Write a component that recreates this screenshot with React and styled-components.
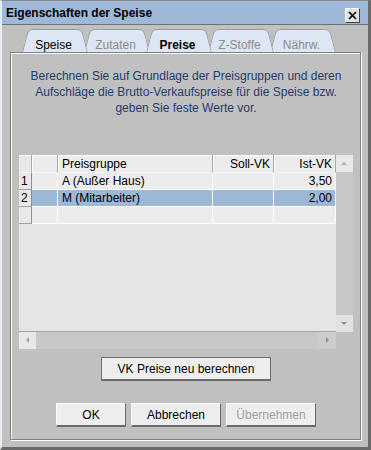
import React from 'react';
import styled, { createGlobalStyle, css } from 'styled-components';

const Global = createGlobalStyle`
  html, body { margin: 0; padding: 0; background: #c0c0c0; }
  body { font-family: "Liberation Sans", Arial, sans-serif; font-size: 12px; color: #000; }
  * { box-sizing: border-box; }
`;

const Window = styled.div`
  width: 371px;
  height: 450px;
  border-left: 2px solid #e4ecf6;
  border-top: 1px solid #8a8a8a;
  border-right: 3px solid #6b6b6b;
  border-bottom: 3px solid #6b6b6b;
  background: #c0c0c0;
  display: flex;
  flex-direction: column;
`;

const TitleBar = styled.div`
  flex: none;
  height: 24px;
  background: #a0b8d8;
  border-bottom: 1px solid #6a7280;
  display: flex;
  align-items: flex-end;
  justify-content: space-between;
  padding: 0 8px 1px 4px;
`;

const Title = styled.div`
  align-self: center;
  margin-top: 2px;
  font-weight: bold;
  font-size: 12px;
  line-height: 14px;
`;

const CloseButton = styled.div`
  width: 15px;
  height: 15px;
  background: #e2e2e2;
  border-top: 1px solid #ffffff;
  border-left: 1px solid #ffffff;
  border-right: 1px solid #404040;
  border-bottom: 1px solid #404040;
  display: flex;
  align-items: center;
  justify-content: center;
`;

const Body = styled.div`
  flex: 1;
  display: flex;
  flex-direction: column;
  padding: 4px 7px 7px 8px;
`;

const TabStrip = styled.div`
  display: flex;
  height: 23px;
  margin-left: 12px;
  flex: none;
`;

const Tab = styled.div`
  position: relative;
  width: 66px;
  height: 23px;
  margin-left: ${p => (p.$first ? '0' : '-4px')};
  z-index: ${p => (p.$selected ? 20 : 10 - p.$index)};
  display: flex;
  justify-content: center;
  align-items: flex-start;
  padding: 9px 3px 0 0;
  line-height: 14px;
  font-size: 12px;
  font-weight: ${p => (p.$selected ? 'bold' : 'normal')};
  color: ${p => (p.$disabled ? '#8c8c8c' : '#000')};

  &::before, &::after {
    content: '';
    position: absolute;
    top: 0;
    bottom: 0;
    width: 60%;
    background: #dce6f4;
    border-top: 1px solid #9c9c9c;
    z-index: -1;
  }
  &::before {
    left: 0;
    border-left: 1px solid #9c9c9c;
    border-top-left-radius: 5px;
    transform: skewX(-15deg);
    transform-origin: bottom left;
  }
  &::after {
    right: 0;
    border-right: 1px solid #9c9c9c;
    border-top-right-radius: 5px;
    transform: skewX(15deg);
    transform-origin: bottom right;
  }
`;

const Panel = styled.div`
  flex: 1;
  border: 1px solid #808080;
  box-shadow: inset 1px 1px 0 #ffffff, 1px 1px 0 #ffffff;
  padding: 15px 7px 0 8px;
  display: flex;
  flex-direction: column;
`;

const Description = styled.p`
  margin: 0;
  text-align: center;
  color: #1f3b73;
  font-size: 12px;
  line-height: 16px;
`;

const ScrollPane = styled.div`
  margin-top: 39px;
  width: 334px;
  height: 194px;
  display: grid;
  grid-template-columns: 317px 17px;
  grid-template-rows: 177px 17px;
`;

const Viewport = styled.div`
  background: #e5e5e5;
  border-bottom: 1px solid #a4a4a4;
  overflow: hidden;
`;

const Table = styled.div`
  display: grid;
  grid-template-columns: 13px 26px 155px 61px 62px;
  grid-auto-rows: 17px;
  grid-template-rows: 18px;
`;

const Cell = styled.div`
  display: flex;
  align-items: center;
  justify-content: ${p => (p.$right ? 'flex-end' : 'flex-start')};
  padding: ${p => (p.$right ? '0 3px 0 0' : '0 0 0 4px')};
  font-size: 12px;
  white-space: nowrap;
  overflow: hidden;
  background: ${p => (p.$selected ? '#9db7d7' : '#ececec')};
  border-right: 1px solid #ffffff;
  border-bottom: 1px solid #ffffff;
`;

const HeaderCell = styled(Cell)`
  background: #ececec;
  border-right: 1px solid #a8a8a8;
  border-bottom: 1px solid #f4f4f4;
  box-shadow: inset 0 1px 0 #ffffff, inset 1px 0 0 #ffffff;
`;

const RowHead = styled.div`
  display: flex;
  align-items: center;
  padding-left: 2px;
  font-size: 12px;
  background: #e8e8e8;
  border-right: 1px solid #8c8c8c;
  border-bottom: 1px solid #a0a0a0;
  ${p => p.$corner && css`
    border-right: 1px solid #a8a8a8;
    border-bottom: 1px solid #f4f4f4;
    box-shadow: inset 0 1px 0 #ffffff;
  `}
`;

const VScroll = styled.div`
  background: #c8c8c8;
  display: flex;
  flex-direction: column;
  justify-content: space-between;
`;

const HScroll = styled.div`
  background: #c8c8c8;
  display: flex;
  justify-content: space-between;
`;

const ArrowButton = styled.div`
  width: 17px;
  height: 17px;
  background: ${p => p.$bg || '#e8e8e8'};
  display: flex;
  align-items: center;
  justify-content: center;
`;

const Corner = styled.div`
  background: #c0c0c0;
`;

const PushButton = styled.button`
  height: 24px;
  width: ${p => p.$w}px;
  padding: 0;
  font-family: "Liberation Sans", Arial, sans-serif;
  font-size: 12px;
  color: ${p => (p.disabled ? '#a0a0a0' : '#000')};
  background: #eeeeee;
  border-style: solid;
  border-width: 1px 1px 2px 1px;
  border-color: ${p => (p.$focus ? '#707070' : '#fafafa')} #6a6a6a #6a6a6a ${p => (p.$focus ? '#707070' : '#fafafa')};
  display: flex;
  align-items: center;
  justify-content: center;
`;

const CenterRow = styled.div`
  display: flex;
  justify-content: center;
  gap: 5px;
  margin-top: ${p => p.$mt}px;
`;

const Arrow = ({ dir, color = '#9c9c9c' }) => {
  const pts = {
    up: '0,4 3,1 6,4',
    down: '0,1 3,4 6,1',
    left: '4,0 1,3 4,6',
    right: '1,0 4,3 1,6',
  }[dir];
  const vertical = dir === 'up' || dir === 'down';
  return (
    <svg width={vertical ? 7 : 5} height={vertical ? 5 : 7} viewBox={vertical ? '0 0 7 5' : '0 0 5 7'}>
      <polygon points={pts} fill={color} />
    </svg>
  );
};

const tabs = [
  { label: 'Speise' },
  { label: 'Zutaten', disabled: true },
  { label: 'Preise', selected: true },
  { label: 'Z-Stoffe', disabled: true },
  { label: 'Nährw.', disabled: true },
];

const rows = [
  { n: '1', name: 'A (Außer Haus)', soll: '', ist: '3,50' },
  { n: '2', name: 'M (Mitarbeiter)', soll: '', ist: '2,00', selected: true },
  { n: '', name: '', soll: '', ist: '' },
];

export default function App() {
  return (
    <>
      <Global />
      <Window>
        <TitleBar>
          <Title>Eigenschaften der Speise</Title>
          <CloseButton>
            <svg width="9" height="9" viewBox="0 0 9 9">
              <path d="M1 1 L8 8 M8 1 L1 8" stroke="#000" strokeWidth="1.7" />
            </svg>
          </CloseButton>
        </TitleBar>
        <Body>
          <TabStrip>
            {tabs.map((t, i) => (
              <Tab key={t.label} $first={i === 0} $index={i} $selected={t.selected} $disabled={t.disabled}>
                {t.label}
              </Tab>
            ))}
          </TabStrip>
          <Panel>
            <Description>
              Berechnen Sie auf Grundlage der Preisgruppen und deren<br />
              Aufschläge die Brutto-Verkaufspreise für die Speise bzw.<br />
              geben Sie feste Werte vor.
            </Description>
            <ScrollPane>
              <Viewport>
                <Table>
                  <RowHead $corner />
                  <HeaderCell />
                  <HeaderCell>Preisgruppe</HeaderCell>
                  <HeaderCell $right>Soll-VK</HeaderCell>
                  <HeaderCell $right>Ist-VK</HeaderCell>
                  {rows.map((r, i) => (
                    <React.Fragment key={i}>
                      <RowHead>{r.n}</RowHead>
                      <Cell $selected={r.selected} />
                      <Cell $selected={r.selected}>{r.name}</Cell>
                      <Cell $selected={r.selected} $right>{r.soll}</Cell>
                      <Cell $selected={r.selected} $right>{r.ist}</Cell>
                    </React.Fragment>
                  ))}
                </Table>
              </Viewport>
              <VScroll>
                <ArrowButton><Arrow dir="up" color="#b0b0b0" /></ArrowButton>
                <ArrowButton $bg="#e2e2e2"><Arrow dir="down" color="#909090" /></ArrowButton>
              </VScroll>
              <HScroll>
                <ArrowButton><Arrow dir="left" color="#a0a0a0" /></ArrowButton>
                <ArrowButton $bg="#cdcdcd"><Arrow dir="right" color="#909090" /></ArrowButton>
              </HScroll>
              <Corner />
            </ScrollPane>
            <CenterRow $mt={8}>
              <PushButton $w={170} $focus>VK Preise neu berechnen</PushButton>
            </CenterRow>
            <CenterRow $mt={22}>
              <PushButton $w={70}>OK</PushButton>
              <PushButton $w={90}>Abbrechen</PushButton>
              <PushButton $w={90} disabled>Übernehmen</PushButton>
            </CenterRow>
          </Panel>
        </Body>
      </Window>
    </>
  );
}
